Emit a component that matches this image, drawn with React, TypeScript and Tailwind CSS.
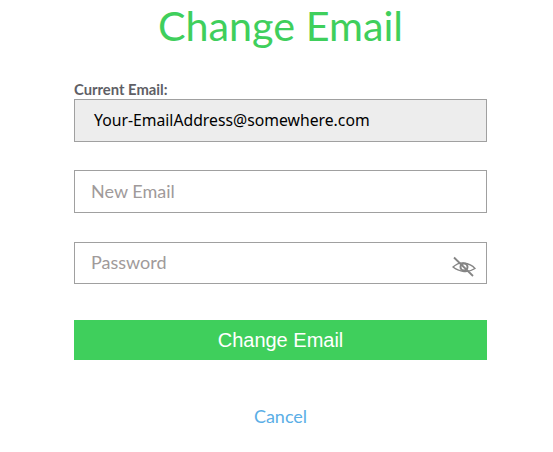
export default function App() {
  return (
    <div className="min-h-screen bg-white font-['Lato',sans-serif]">
      <div className="ml-[74px] flex w-[413px] flex-col">
        <h1 className="mt-[1px] h-[48px] text-center text-[41.300px] leading-[48px] font-normal text-[#3fcf5c]">Change Email</h1>

        <label className="mt-[30px] h-[20px] text-[14.800px] leading-[20px] font-bold text-[#5f5f66]">Current Email:</label>
        <div className="flex h-[43px] items-center border border-[#a0a0a0] bg-[#ededed] pl-[19px] font-['Noto_Sans',sans-serif] text-[15.750px] text-black">
          Your-EmailAddress@somewhere.com
        </div>

        <input
          type="text"
          placeholder="New Email"
          className="mt-[28px] h-[43px] border border-[#a0a0a0] px-[16px] pb-[2px] text-[18px] outline-none placeholder:text-[#a09a9a]"
        />

        <div className="relative mt-[29px] h-[42px]">
          <input
            type="password"
            placeholder="Password"
            className="h-full w-full border border-[#a0a0a0] px-[16px] pb-[2px] text-[18px] outline-none placeholder:text-[#a09a9a]"
          />
          <svg className="absolute top-[14px] right-[11px]" width="24" height="22" viewBox="0 0 24 22" fill="none" stroke="#858585">
            <path d="M1 11C5 7.500 9 6.500 12 7C16 7.500 20 9 23 12.500C19 15 15 16 12 15.500C8 15 4 13.500 1 11Z" strokeWidth="1.300" />
            <circle cx="12" cy="11" r="3.500" strokeWidth="2" />
            <path d="M2 1.500L21 20" strokeWidth="1.800" />
          </svg>
        </div>

        <button className="mt-[36px] h-[40px] bg-[#3fcf5c] font-['Liberation_Sans',sans-serif] text-[20px] text-white">Change Email</button>

        <a className="mt-[45px] text-center text-[18px] leading-[22px] text-[#5aaee6]">Cancel</a>
      </div>
    </div>
  );
}
